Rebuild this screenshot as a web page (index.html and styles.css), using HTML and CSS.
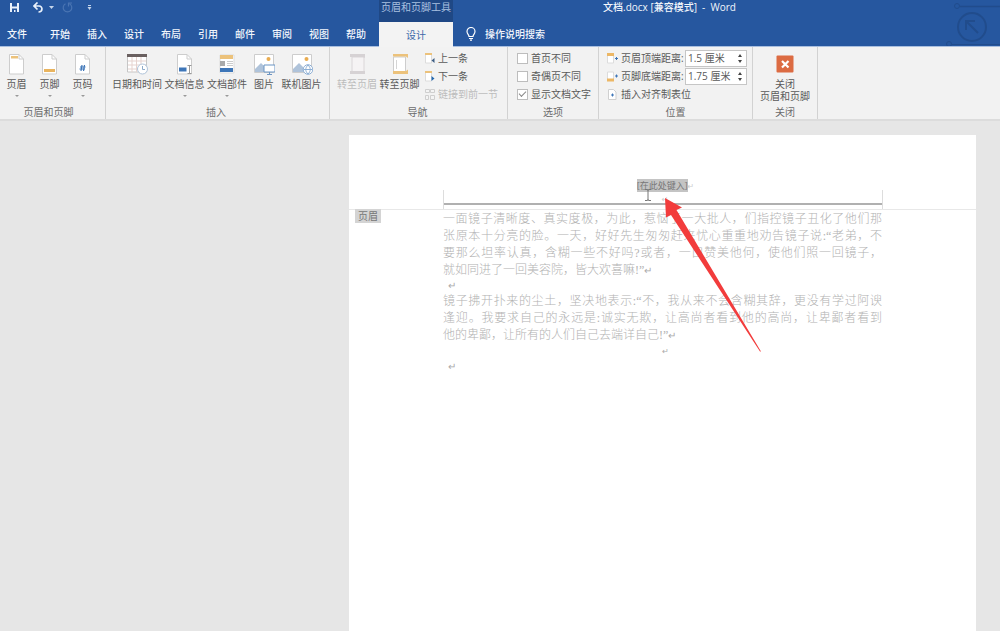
FILE: index.html
```html
<!DOCTYPE html>
<html lang="zh-CN">
<head>
<meta charset="utf-8">
<title>文档.docx [兼容模式] - Word</title>
<link rel="stylesheet" href="styles.css">
</head>
<body>
<header class="top">
  <div class="quick">
    <button class="plain" aria-label="保存"><svg width="11" height="11" viewBox="0 0 11 11"><path d="M1 1h9v9H1z" fill="#e9f1fb"/><path d="M3 1h5v3.500H3zM3 6.500h5V10H6.500V8H5v2H3z" fill="#24549c"/></svg></button>
    <button class="plain" aria-label="撤消"><svg width="10" height="11" viewBox="0 0 10 11"><path d="M4.500.500 1 4l3.500 3.500M1.500 4H6c4 0 4 6-.5 6" fill="none" stroke="#e9f1fb" stroke-width="1.700"/></svg></button>
    <svg class="quick-caret" width="5" height="3" viewBox="0 0 5 3"><path d="M0 0h5L2.500 3z" fill="#c5d5ea"/></svg>
    <button class="plain" aria-label="恢复"><svg width="11" height="11" viewBox="0 0 11 11"><path d="M7.500 1.800A4.300 4.300 0 1 1 3.500 1.800M6.500 4.500V1h3.500" fill="none" stroke="#4a75b3" stroke-width="1.200"/></svg></button>
    <button class="plain more" aria-label="自定义快速访问工具栏"><svg width="5" height="5" viewBox="0 0 5 5"><path d="M1 0h3v1H1zM.500 2h4L2.500 5z" fill="#c5d5ea"/></svg></button>
  </div>
  <div class="context">页眉和页脚工具</div>
  <div class="title">文档.docx [兼容模式]&nbsp; -&nbsp; Word</div>
  <nav class="tabs">
    <button>文件</button><button>开始</button><button>插入</button><button>设计</button><button>布局</button><button>引用</button><button>邮件</button><button>审阅</button><button>视图</button><button>帮助</button>
  </nav>
  <button class="tab-active">设计</button>
  <button class="tell">
    <svg width="10" height="14" viewBox="0 0 10 14"><path d="M3 9.500C3 7.500 1 7 1 4.500a4 4 0 0 1 8 0C9 7 7 7.500 7 9.500zM3 11.500h4M4 13.200h2" fill="none" stroke="#fff" stroke-width="1.200"/></svg>
    操作说明搜索
  </button>
  <svg class="circuit" width="56" height="46" viewBox="0 0 56 46" fill="none" stroke="#1e4681"><circle cx="13" cy="6" r="2.500"/><path d="M16 6.500h40" stroke-width="1.500"/><circle cx="28" cy="27" r="14" stroke-width="2"/><path d="M34 33 23 22M22 30v-9h9" stroke-width="2"/><circle cx="5" cy="44" r="2.500"/><path d="M8 44.500h48"/></svg>
</header>

<section class="ribbon">
  <div class="group g-hf">
    <div class="body">
      <button class="big"><svg width="22" height="22" viewBox="0 0 22 22"><path d="M3.500 1.500h9.500L17.500 6v15h-14z" fill="#fff" stroke="#cdcdcd"/><path d="M13 1.500V6h4.500" fill="none" stroke="#cdcdcd"/><path d="M5 3h7v2.500H5z" fill="#ecc27b"/></svg>页眉<i class="caret"></i></button>
      <button class="big"><svg width="22" height="22" viewBox="0 0 22 22"><path d="M3.500 1.500h9.500L17.500 6v15h-14z" fill="#fff" stroke="#cdcdcd"/><path d="M13 1.500V6h4.500" fill="none" stroke="#cdcdcd"/><path d="M5 16h11v3H5z" fill="#e9b45f"/></svg>页脚<i class="caret"></i></button>
      <button class="big"><svg width="22" height="22" viewBox="0 0 22 22"><path d="M3.500 1.500h9.500L17.500 6v15h-14z" fill="#fff" stroke="#cdcdcd"/><path d="M13 1.500V6h4.500" fill="none" stroke="#cdcdcd"/><path d="m10 12-1 6M12.500 12l-1 6M8 14h5.500M7.500 16H13" stroke="#3e76b8" stroke-width="1.200"/></svg>页码<i class="caret"></i></button>
    </div>
    <div class="name">页眉和页脚</div>
  </div>

  <div class="group g-ins">
    <div class="body">
      <button class="big w52"><svg width="22" height="22" viewBox="0 0 22 22"><path d="M1.500 3h19v16h-19z" fill="#fff" stroke="#c6c6c6"/><path d="M6 4v15M10.500 4v15M15 4v15M2 8h18M2 12h18M2 16h18" stroke="#e6d3cf"/><path d="M1 1h20v3H1z" fill="#6a6060"/><circle cx="16.500" cy="16" r="5" fill="#fff" stroke="#b0c4da"/><path d="M16.500 13v3.500H19" fill="none" stroke="#8fabc9"/></svg>日期和时间</button>
      <button class="big w43"><svg width="22" height="22" viewBox="0 0 22 22"><path d="M3.500 1.500h9.500L17.500 6v15h-14z" fill="#fff" stroke="#cdcdcd"/><path d="M13 1.500V6h4.500" fill="none" stroke="#cdcdcd"/><path d="M5 14.500h7.500v4H5z" fill="#3e76b8"/><path d="M13.500 12.500h4M13.500 20.500h4M15.500 12.500v8" stroke="#999"/></svg>文档信息<i class="caret"></i></button>
      <button class="big w42"><svg width="22" height="22" viewBox="0 0 22 22"><path d="M4 2h14v18H4z" fill="#fff" stroke="#dcdcdc"/><path d="M4 2h13v4H4z" fill="#ecc27b"/><path d="M4 8h5v5H4z" fill="#aaa"/><path d="M11 8.500h6M11 10.500h6M11 12.500h6" stroke="#ccc"/><path d="M4 15h13v4H4z" fill="#3e76b8"/></svg>文档部件<i class="caret"></i></button>
      <button class="big w32"><svg width="22" height="22" viewBox="0 0 22 22"><path d="M1.500 1.500h19v18h-19z" fill="#fff" stroke="#cdcdcd"/><circle cx="15.500" cy="6" r="2" fill="#e9ac50"/><path d="m2 19v-3l6-6 7 7v2z" fill="#afc3da"/><path d="M11 12h11v7H11z" fill="#fff" stroke="#6b95c4"/><path d="M16.500 19v2M14 21.500h5" stroke="#6b95c4"/></svg>图片</button>
      <button class="big w43"><svg width="22" height="22" viewBox="0 0 22 22"><path d="M1.500 1.500h19v18h-19z" fill="#fff" stroke="#cdcdcd"/><circle cx="15.500" cy="6" r="2" fill="#e9ac50"/><path d="m2 19v-3l6-6 7 7v2z" fill="#afc3da"/><circle cx="17" cy="16.500" r="4.800" fill="#fff" stroke="#8caed4"/><path d="M17 12c-3 3-3 6 0 9c3-3 3-6 0-9M12.500 16.500h9" fill="none" stroke="#8caed4"/></svg>联机图片</button>
    </div>
    <div class="name">插入</div>
  </div>

  <div class="group g-nav">
    <div class="body">
      <button class="big w42" disabled><svg width="22" height="22" viewBox="0 0 22 22"><path d="M6 4h12v15H6z" fill="#f5f3f4" stroke="#dad6d8"/><path d="M4 1h15v4l-2-1H4zM4 18h15v3H4z" fill="#d6d2d4"/></svg>转至页眉</button>
      <button class="big w43"><svg width="22" height="22" viewBox="0 0 22 22"><path d="M4.500 4h12v15h-12z" fill="#fff" stroke="#cdcdcd"/><path d="M4 1h15v4l-2-1.500H4zM4 18h13l2-1.500V21H4z" fill="#ecc27b"/><path d="M7.500 7v9" stroke="#d5d5d5"/></svg>转至页脚</button>
      <div class="list">
        <button class="row"><svg width="11" height="11" viewBox="0 0 11 11"><path d="M1.500 1.500h6V10h-6z" fill="#fff" stroke="#dcdcdc"/><path d="M1 0h7v2H1z" fill="#ecc27b"/><path d="M10.500 5v5L7.500 7.500z" fill="#3f5f85"/></svg>上一条</button>
        <button class="row"><svg width="11" height="11" viewBox="0 0 11 11"><path d="M1.500 1.500h6V10h-6z" fill="#fff" stroke="#dcdcdc"/><path d="M1 0h7v2H1z" fill="#ecc27b"/><path d="M7.500 5v5l3-2.500z" fill="#2468ae"/></svg>下一条</button>
        <button class="row" disabled><svg width="11" height="11" viewBox="0 0 11 11"><path d="M1.500.500h4v3h-4zM6.500.500h4v3h-4zM1.500 6.500h3v4h-3zM6.500 6.500h4v4h-4z" fill="#f4f4f4" stroke="#cfcfcf"/></svg>链接到前一节</button>
      </div>
    </div>
    <div class="name">导航</div>
  </div>

  <div class="group g-opt">
    <div class="body">
      <div class="list">
        <label class="row"><input type="checkbox">首页不同</label>
        <label class="row"><input type="checkbox">奇偶页不同</label>
        <label class="row"><input type="checkbox" checked>显示文档文字</label>
      </div>
    </div>
    <div class="name">选项</div>
  </div>

  <div class="group g-pos">
    <div class="body">
      <div class="list grow">
        <div class="row"><svg width="11" height="11" viewBox="0 0 11 11"><path d="M.500 2v8h6V2" fill="#fff" stroke="#dcdcdc"/><path d="M0 0h7v3H0z" fill="#ecb765"/><path d="M8 5.500h3M9.500 4v3" stroke="#3e76b8"/></svg><label for="top">页眉顶端距离:</label><span class="spin"><input id="top" type="text" value="1.5 厘米"><span class="steps"><button aria-label="增大顶端距离"></button><button class="down" aria-label="减小顶端距离"></button></span></span></div>
        <div class="row"><svg width="11" height="11" viewBox="0 0 11 11"><path d="M.500 9V1h6v8" fill="#fff" stroke="#dcdcdc"/><path d="M0 7.500h7v3H0z" fill="#ecb765"/><path d="M8 5h3M9.500 3.500v3" stroke="#3e76b8"/></svg><label for="bottom">页脚底端距离:</label><span class="spin"><input id="bottom" type="text" value="1.75 厘米"><span class="steps"><button aria-label="增大底端距离"></button><button class="down" aria-label="减小底端距离"></button></span></span></div>
        <button class="row"><svg width="11" height="11" viewBox="0 0 11 11"><path d="M1.500.500h5L9 3v7.500H1.500z" fill="#fff" stroke="#d0d0d0"/><path d="M4 6h3M5.500 4.500v3" stroke="#3e76b8"/></svg>插入对齐制表位</button>
      </div>
    </div>
    <div class="name">位置</div>
  </div>

  <div class="group g-close">
    <div class="body">
      <button class="big w64"><svg width="22" height="22" viewBox="0 0 22 22"><rect x="2.500" y="2.500" width="17" height="17" rx="1" fill="#dc6b42"/><path d="m8 8 6.500 6.500M14.500 8 8 14.500" stroke="#fff" stroke-width="2.200"/></svg>关闭<br>页眉和页脚</button>
    </div>
    <div class="name">关闭</div>
  </div>
</section>

<main class="desk">
  <article class="page">
    <div class="page-head">
      <p class="prompt"><span class="selected">[在此处键入]</span><span class="mark">↵</span></p>
      <p class="head-end mark">↵</p>
      <svg class="ibeam" width="8" height="12" viewBox="0 0 8 12"><path d="M1 .500h2.500l.5 1 .5-1H7M4 1v10M1 11.500h2.500l.5-1 .5 1H7" fill="none" stroke="#777"/></svg>
    </div>
    <span class="tag">页眉</span>
    <div class="text">
      <p>一面镜子清晰度、真实度极，为此，惹恼了一大批人，们指控镜子丑化了他们那<br>张原本十分亮的脸。一天，好好先生匆匆赶来忧心重重地劝告镜子说:“老弟，不<br>要那么坦率认真，含糊一些不好吗?或者，一口赞美他何，使他们照一回镜子，<br><span class="end">就如同进了一回美容院，皆大欢喜嘛!”<span class="mark">↵</span></span></p>
      <p class="blank mark">↵</p>
      <p>镜子拂开扑来的尘土，坚决地表示:“不，我从来不会含糊其辞，更没有学过阿谀<br>逢迎。我要求自己的永远是:诚实无欺，让高尚者看到他的高尚，让卑鄙者看到<br><span class="end">他的卑鄙，让所有的人们自己去端详自己!”<span class="mark">↵</span></span></p>
      <p class="middle mark">↵</p>
      <p class="blank mark">↵</p>
    </div>
    <svg class="arrow" width="97" height="154" viewBox="0 0 97 154"><path d="M0 0 17 9.500 11.500 12 96 153.500 95 153.500 6 17 1 19.500z" fill="#f23c3c"/></svg>
  </article>
</main>
</body>
</html>
```

FILE: styles.css
```css
* { box-sizing: border-box; }
body {
  margin: 0;
  min-height: 100vh;
  display: flex;
  flex-direction: column;
  background: #e6e6e6;
  color: #5a5a5a;
  font: 10px/14px "Open Sans", "Noto Sans CJK SC", sans-serif;
}
p { margin: 0; }
svg { display: block; flex: none; }
button {
  border: 0;
  padding: 0;
  background: none;
  color: inherit;
  font: inherit;
}

.top {
  position: relative;
  display: grid;
  grid-template-columns: 379px 74px 1fr;
  grid-template-rows: 22px 24px;
  background: #26579f;
  border-bottom: 1px solid #a9bfdf;
  color: #f2f6fc;
}
.quick { display: flex; align-items: center; padding: 0 0 7px 9px; }
.quick .plain + .plain { margin-left: 13px; }
.quick-caret { margin: 0 8px 0 6px; }
.quick .plain.more { margin-left: 14px; }
.context {
  background: #1f4885;
  color: #a9c0e0;
  text-align: center;
  white-space: nowrap;
}
.title { padding-left: 150px; font-weight: 500; }
.tabs { display: flex; padding-left: 7px; }
.tabs button { flex: none; width: 37px; text-align: left; font-weight: 500; }
.tabs button:first-child { width: 43px; }
.tab-active { background: #f3f3f3; color: #3d68a8; margin-bottom: -1px; position: relative; }
.tell {
  display: flex;
  align-items: center;
  gap: 9px;
  padding-left: 13px;
  font-weight: 500;
}
.circuit { position: absolute; right: 0; top: 0; opacity: .6; }

.ribbon {
  display: flex;
  background: #f2f2f2;
  border-bottom: 2px solid #dcdcdc;
}
.group {
  display: flex;
  flex-direction: column;
  padding-top: 2px;
  border-right: 1px solid #d2d2d2;
}
.g-hf { width: 106px; }
.g-ins { width: 224px; padding-left: 5px; }
.g-nav { width: 178px; padding-left: 6px; }
.g-opt { width: 91px; padding-left: 8px; }
.g-pos { width: 154px; padding-left: 8px; }
.g-close { width: 65px; }
.body { display: flex; height: 56px; }
.name { text-align: center; color: #6c6c6c; height: 14px; padding-right: 8px; }
.g-close .name { padding-right: 0; }
.big {
  width: 33px;
  padding-top: 4px;
  display: flex;
  flex-direction: column;
  align-items: center;
  line-height: 12px;
  white-space: nowrap;
}
.big svg { margin-bottom: 3px; }
.w32 { width: 32px; }
.w42 { width: 42px; }
.w43 { width: 43px; }
.w52 { width: 52px; }
.w64 { width: 64px; }
.big:disabled, .row:disabled { color: #bcbcbc; }
.caret {
  margin-top: 5px;
  border: 2px solid transparent;
  border-top-color: #999;
}
.list { display: flex; flex-direction: column; padding-left: 3px; }
.g-opt .list, .g-pos .list { padding-left: 0; }
.grow { flex: 1; }
.row { display: flex; align-items: center; gap: 3px; height: 18px; white-space: nowrap; }
.row input[type="checkbox"] {
  appearance: none;
  width: 11px;
  height: 11px;
  margin: 0 0 0 1px;
  background: #fff;
  border: 1px solid #bdbdbd;
  display: grid;
  place-items: center;
}
.row input:checked::before {
  content: "";
  width: 6px;
  height: 3px;
  margin-bottom: 2px;
  border: solid #888;
  border-width: 0 0 1px 1px;
  transform: rotate(-45deg);
}
.spin {
  display: flex;
  width: 62px;
  height: 17px;
  margin-left: auto;
  margin-right: 5px;
  background: #fff;
  border: 1px solid #c6c6c6;
}
.g-pos label { width: 60px; }
.spin input {
  flex: 1;
  min-width: 0;
  border: 0;
  padding: 0 0 0 2px;
  background: none;
  color: inherit;
  font: inherit;
}
.steps { display: flex; flex-direction: column; justify-content: space-evenly; width: 10px; }
.steps button {
  width: 0;
  height: 0;
  margin-left: 2px;
  border: solid transparent;
  border-width: 0 2px 3px;
  border-bottom-color: #444;
}
.steps .down { border-width: 3px 2px 0; border-top-color: #444; }

.desk { flex: 1; display: flex; padding: 14px 24px 0 349px; }
.page { position: relative; flex: 1; background: #fff; }
.page-head {
  position: relative;
  height: 75px;
  padding: 44px 94px 0;
  border-bottom: 1px solid #e8e8e8;
  text-align: center;
}
.page-head::after {
  content: "";
  position: absolute;
  left: 94px;
  right: 93px;
  bottom: 0;
  height: 19px;
  border: solid #ddd;
  border-width: 0 1px;
  background: linear-gradient(#b0b0b0, #b0b0b0) 0 13px / 100% 2px no-repeat;
}
.mark { font-family: "DejaVu Sans", sans-serif; font-size: 10px; color: #aaa; }
.prompt { font-size: 9px; line-height: 14px; padding-left: 6px; }
.prompt .mark { font-size: 8px; color: #ccc; }
.selected { display: inline-block; height: 13px; line-height: 13px; background: #c4c4c4; color: #777; }
.head-end { font-size: 8px; line-height: 12px; padding-left: 5px; color: #ccc; }
.ibeam { position: absolute; left: 295px; top: 54px; }
.tag {
  position: absolute;
  left: 6px;
  top: 74px;
  width: 26px;
  height: 14px;
  line-height: 14px;
  text-align: center;
  background: #d4d4d4;
  color: #777;
}
.text {
  padding: 1px 94px 0;
  color: #b2b2b2;
  font: 300 12px/17px "Liberation Serif", "Noto Sans CJK SC", serif;
}
.text p { text-align: justify; text-align-last: justify; white-space: nowrap; }
.text .end { display: block; text-align-last: left; }
.text .mark { line-height: 14px; }
.text .blank { text-align-last: left; padding-left: 5px; }
.text .middle { text-align-last: center; line-height: 16px; font-size: 8px; padding-left: 5px; }
.arrow { position: absolute; left: 316px; top: 63px; }
```
